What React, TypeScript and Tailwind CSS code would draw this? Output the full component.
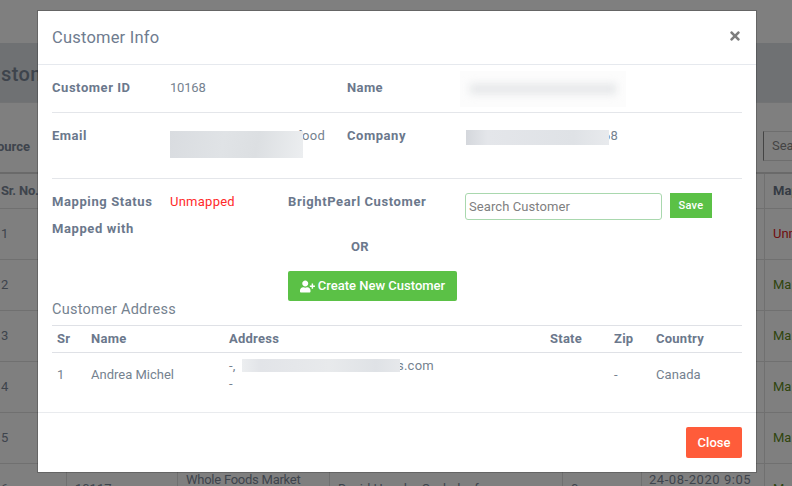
import React from 'react';
import { FaTimes, FaUserPlus } from 'react-icons/fa';

const rows = ['1', '2', '3', '4', '5', '6'];

function PageBehind() {
  return (
    <div className="w-[792px] text-[13px] text-[#7c8899]">
      <div className="h-[43px] bg-white" />
      <div className="h-[60px] bg-[#dee2e6] flex items-center border-b border-[#e4e6e8]">
        <h1 className="-ml-[24px] mt-[2px] text-[20px] font-medium tracking-[0.4px] text-[#7c8899] whitespace-nowrap">Customers</h1>
      </div>
      <div className="h-[69px] bg-white relative flex items-center">
        <span className="-ml-[11px] mt-[19px] font-bold">Source</span>
        <div className="absolute left-[763px] top-[28px] w-[60px] h-[30px] border border-[#dddddd] border-l-[#888888] pl-[8px] flex items-center text-[#888888]">Search</div>
      </div>
      <div className="grid grid-cols-[66px_111px_152px_233px_79px_124px_27px] h-[36px] border-t-2 border-[#d4d4d4] font-bold items-center">
        <div className="pl-[1px] tracking-[-0.2px] whitespace-nowrap">Sr. No.</div>
        <div /><div /><div /><div /><div className="h-full border-r border-[#e0e0e0]" />
        <div className="pl-[8px] text-[#6b7788]">Map</div>
      </div>
      {rows.map((n) => (
        <div key={n} className="grid grid-cols-[66px_111px_152px_233px_79px_124px_27px] h-[51px] border-t border-[#e0e0e0]">
          <div className="pl-[1px] flex items-center">{n}</div>
          <div className="border-l border-[#e0e0e0] pl-[8px] flex items-center">{n === '6' ? '10117' : ''}</div>
          <div className="border-l border-[#e0e0e0] pl-[8px] leading-[18px] pt-[7px] tracking-[-0.25px] whitespace-nowrap">{n === '6' ? 'Whole Foods Market' : ''}</div>
          <div className="border-l border-[#e0e0e0] pl-[8px] flex items-center whitespace-nowrap overflow-hidden">{n === '6' ? 'David Hansler Oxybeleaf' : ''}</div>
          <div className="border-l border-[#e0e0e0] pl-[8px] flex items-center">{n === '6' ? '0' : ''}</div>
          <div className="border-l border-r border-[#e0e0e0] pl-[7px] leading-[18px] pt-[7px] whitespace-nowrap tracking-[0.55px]">{n === '6' ? '24-08-2020 9:05' : ''}</div>
          <div className={n === '1' ? 'pl-[8px] flex items-center text-[#e02020]' : 'pl-[8px] flex items-center text-[#5f8a20]'}>
            {n === '1' ? 'Unm' : 'Map'}
          </div>
        </div>
      ))}
    </div>
  );
}

export default function App() {
  return (
    <div className="relative w-[792px] h-[486px] overflow-hidden bg-white font-['Roboto',sans-serif]">
      <PageBehind />
      <div className="absolute inset-0 bg-black/50" />

      {/* Modal */}
      <div className="absolute left-[38px] top-[11px] w-[718px] h-[461px] bg-white flex flex-col text-[13px] leading-[18px] text-[#75828f] tracking-[0.25px] shadow-[0_0_0_1px_rgba(0,0,0,0.2)]">
        <div className="h-[54px] shrink-0 border-b border-[#e6e9ee] flex items-center justify-between pl-[14px] pr-[14px]">
          <h2 className="text-[16.5px] text-[#6f7c8f] tracking-[0.2px]">Customer Info</h2>
          <FaTimes className="text-[14px] text-[#7d7d7d] -mt-[3px]" />
        </div>

        <div className="px-[14px]">
          <div className="h-[48px] grid grid-cols-[118px_177px_118px_1fr] items-center pb-[2px] border-b border-[#e4e6ea] relative">
            <div className="font-bold text-[#6b788c] tracking-[0.55px]">Customer ID</div>
            <div className="tracking-[-0.2px]">10168</div>
            <div className="font-bold text-[#6b788c] tracking-[0.4px]">Name</div>
            <div className="-ml-[5px] mt-[2px] w-[166px] h-[36px] bg-[#fcfcfc] flex items-center justify-center overflow-hidden">
              <div className="w-[146px] h-[10px] bg-[#e4e6e8] blur-[4px]" />
            </div>
          </div>

          <div className="h-[66px] grid grid-cols-[118px_177px_118px_1fr] items-start pt-[14px] border-b border-[#e4e6ea]">
            <div className="font-bold text-[#6b788c] tracking-[0.5px]">Email</div>
            <div className="relative w-[155px] text-right">
              food
              <div className="absolute left-0 top-[4px] w-[133px] h-[27px] bg-[linear-gradient(100deg,#d9dce0,#e0e3e6_40%,#dcdfe2_65%,#eceef0)]" />
            </div>
            <div className="font-bold text-[#6b788c] tracking-[0.55px]">Company</div>
            <div className="relative w-[153px] text-right">
              68
              <div className="absolute left-[1px] top-[3px] w-[143px] h-[15px] bg-[linear-gradient(90deg,#d4d7dc,#e4e6ea_15%,#dfe2e6_75%,#e8eaed)]" />
            </div>
          </div>

          <div className="grid grid-cols-[118px_118px_177px_1fr] h-[146px] pt-[14px]">
            <div className="flex flex-col gap-[9px] font-bold text-[#6b788c] tracking-[0.6px]">
              <div>Mapping Status</div>
              <div>Mapped with</div>
            </div>
            <div className="text-[#ff2a2a]">Unmapped</div>
            <div className="flex flex-col">
              <div className="font-bold text-[#6b788c] tracking-[0.6px] whitespace-nowrap">BrightPearl Customer</div>
              <div className="mt-[27px] ml-[63px] font-bold text-[#6b788c]">OR</div>
              <button className="mt-[15px] w-[169px] h-[30px] bg-[#5bc146] rounded-[2px] text-white font-medium flex items-center justify-center gap-[3px] tracking-normal">
                <FaUserPlus className="text-[15px]" />
                Create New Customer
              </button>
            </div>
            <div className="flex items-start gap-[8px]">
              <div className="w-[197px] h-[27px] border border-[#a9d8ae] rounded-[3px] pl-[3px] flex items-center text-[#808080] tracking-[0.08px]">Search Customer</div>
              <button className="w-[42px] h-[25px] bg-[#5bc146] text-white text-[11px] font-medium">Save</button>
            </div>
          </div>

          <h3 className="-mt-[24px] mb-[6px] text-[14.5px] leading-[18px] text-[#75828f]">Customer Address</h3>

          <div className="grid grid-cols-[34px_138px_321px_64px_42px_91px] h-[28px] items-center border-y border-[#dfe1e6] font-bold text-[#6b788c]">
            <div className="pl-[5px]">Sr</div>
            <div className="pl-[5px]">Name</div>
            <div className="pl-[5px]">Address</div>
            <div className="pl-[5px]">State</div>
            <div className="pl-[5px]">Zip</div>
            <div className="pl-[5px]">Country</div>
          </div>
          <div className="grid grid-cols-[34px_138px_321px_64px_42px_91px] h-[59px] items-start">
            <div className="pl-[5px] pt-[13px]">1</div>
            <div className="pl-[5px] pt-[13px] tracking-normal">Andrea Michel</div>
            <div className="pl-[5px] pt-[4px] relative">
              <div className="w-[205px] text-right">s.com</div>
              <div>-</div>
              <span className="absolute left-[5px] top-[4px]">-,</span>
              <div className="absolute left-[18px] top-[6px] w-[158px] h-[13px] bg-[linear-gradient(90deg,#eceef0,#e2e4e8_12%,#e8eaec_55%,#dfe2e6_85%,#e6e8eb)]" />
            </div>
            <div />
            <div className="pl-[5px] pt-[13px]">-</div>
            <div className="pl-[5px] pt-[13px] tracking-[0.1px]">Canada</div>
          </div>
        </div>

        <div className="flex-1 border-t border-[#e9ebee] flex justify-end items-start pt-[14px] pr-[14px]">
          <button className="w-[56px] h-[31px] bg-[#ff5c3a] rounded-[2px] text-white font-medium tracking-normal">Close</button>
        </div>
      </div>
    </div>
  );
}
